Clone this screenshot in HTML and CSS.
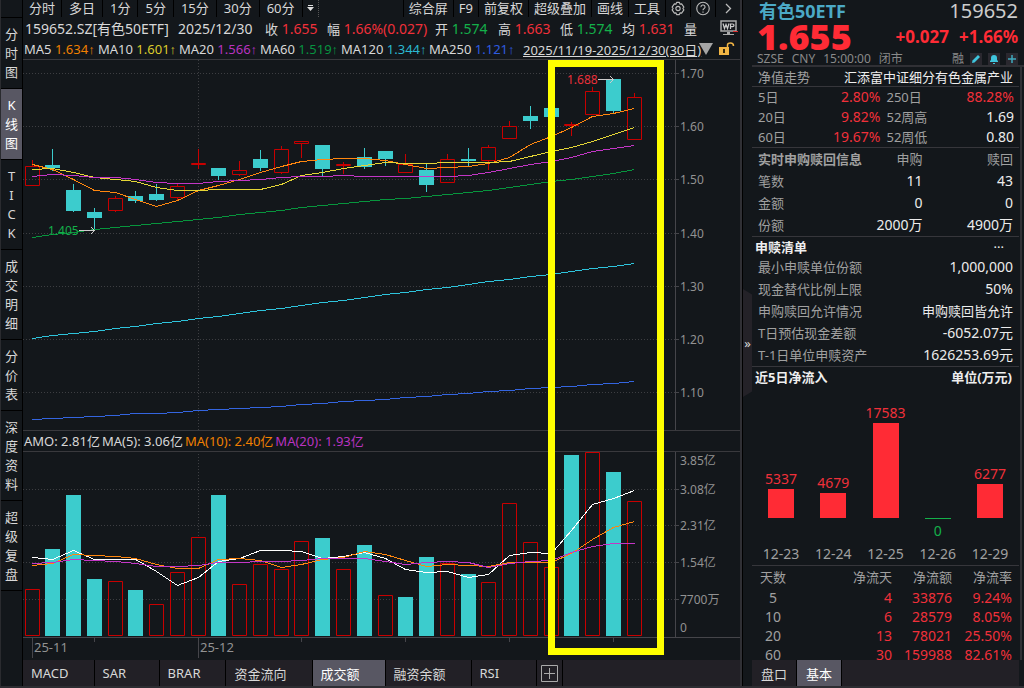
FILE: index.html
```html
<!DOCTYPE html>
<html lang="zh-CN">
<head>
  <meta charset="UTF-8">
  <meta name="viewport" content="width=device-width, initial-scale=1.0">
  <title>有色50ETF 159652.SZ</title>
  <link rel="stylesheet" href="styles.css">
</head>
<body>

<div class="app">
  <nav class="views">
    <button>分<br>时<br>图</button>
    <button class="active">K<br>线<br>图</button>
    <button>T<br>I<br>C<br>K</button>
    <button>成<br>交<br>明<br>细</button>
    <button>分<br>价<br>表</button>
    <button>深<br>度<br>资<br>料</button>
    <button>超<br>级<br>复<br>盘</button>
  </nav>

  <main class="chart-pane">
    <div class="toolbar">
      <div class="periods">
        <button>分时</button>
        <button>多日</button>
        <button>1分</button>
        <button>5分</button>
        <button>15分</button>
        <button>30分</button>
        <button>60分</button>
        <button class="more" aria-label="更多周期">
          <svg width="7" height="7" viewBox="0 0 7 7"><path d="M1 0.5H6" stroke="#ddd"/><path d="M0 2H7L3.500 6Z" fill="#ddd"/></svg>
        </button>
      </div>
      <div class="tools">
        <button>综合屏</button>
        <button>F9</button>
        <button>前复权</button>
        <button>超级叠加</button>
        <button>画线</button>
        <button>工具</button>
        <button class="icon" aria-label="设置">
          <svg width="15" height="15" viewBox="0 0 15 15" fill="none" stroke="#bbb" stroke-width="1.200"><path d="M6 1H9L9.600 2.800L11.400 2.500L13.800 6L12.700 7.500L13.800 9L11.400 12.500L9.600 12.200L9 14H6L5.400 12.200L3.600 12.500L1.200 9L2.300 7.500L1.200 6L3.600 2.500L5.400 2.800Z" stroke-linejoin="round"/><circle cx="7.500" cy="7.500" r="2.300"/></svg>
        </button>
        <button class="icon" aria-label="帮助">
          <svg width="15" height="15" viewBox="0 0 15 15" fill="none" stroke="#bbb" stroke-width="1.200"><circle cx="7.500" cy="7.500" r="6.700"/><path d="M5.300 6A2.200 2.100 0 1 1 8.500 7.700Q7.500 8.200 7.500 9.500"/><path d="M7.500 10.800V12.100"/></svg>
        </button>
        <button class="icon" aria-label="展开">
          <svg width="7" height="11" viewBox="0 0 7 11" fill="none" stroke="#bbb" stroke-width="1.300"><path d="M1 1L5.500 5.500L1 10"/></svg>
        </button>
      </div>
    </div>

    <div class="quote">
      <span>159652.SZ[有色50ETF]</span>
      <span>2025/12/30</span>
      <span><i>收</i> <b class="red">1.655</b></span>
      <span><i>幅</i> <b class="red">1.66%(0.027)</b></span>
      <span><i>开</i> <b class="green">1.574</b></span>
      <span><i>高</i> <b class="red">1.663</b></span>
      <span><i>低</i> <b class="green">1.574</b></span>
      <span><i>均</i> <b class="red">1.631</b></span>
      <span><i>量</i></span>
      <button aria-label="WP">
        <svg width="18" height="16" viewBox="0 0 18 16"><path d="M1 1H16V11H1Z" fill="#17191d" stroke="#aaa" stroke-width="1.500"/><path d="M3 3.500L4.500 8.500L6 4.500L7.500 8.500L9 3.500M10.500 9V4H12.500Q14 4 14 5.300Q14 6.600 12.500 6.600H10.500" fill="none" stroke="#ccc" stroke-width="1.200"/><path d="M7 12H10V14H14V15H3V14H7Z" fill="#aaa"/><path d="M13 11.500H18" stroke="#d33"/></svg>
      </button>
    </div>

    <div class="averages">
      <span>MA5 <b class="orange">1.634↑</b></span>
      <span>MA10 <b class="yellow">1.601↑</b></span>
      <span>MA20 <b class="purple">1.566↑</b></span>
      <span>MA60 <b class="ma-green">1.519↑</b></span>
      <span>MA120 <b class="cyan">1.344↑</b></span>
      <span>MA250 <b class="blue">1.121↑</b></span>
      <a href="#">2025/11/19-2025/12/30(30日)</a>
      <svg width="14" height="12" viewBox="0 0 14 12"><path d="M0 0H14L7 12Z" fill="#a5a5a5"/></svg>
      <button aria-label="解锁">
        <svg width="16" height="14" viewBox="0 0 16 14"><path d="M0 5H10V13H0Z" fill="#f2b544"/><path d="M8.500 5V3Q8.500 1 11.500 1Q14.500 1 14.500 4" fill="none" stroke="#f2b544" stroke-width="1.500"/><path d="M4 7H6V11H4Z" fill="#3a2c10"/></svg>
      </button>
    </div>

    <div class="charts">
      <svg class="plot" id="price" viewBox="23 60 717 370"></svg>
      <div class="amount">
        <span>AMO: 2.81亿</span>
        <span>MA(5): 3.06亿</span>
        <span class="orange">MA(10): 2.40亿</span>
        <span class="purple">MA(20): 1.93亿</span>
      </div>
      <svg class="plot" id="volume" viewBox="23 452 717 208"></svg>
      <div class="marker"></div>
    </div>

    <div class="tabs">
      <button>MACD</button>
      <button>SAR</button>
      <button>BRAR</button>
      <button>资金流向</button>
      <button class="active">成交额</button>
      <button>融资余额</button>
      <button>RSI</button>
      <button class="add" aria-label="添加指标">
        <svg width="17" height="17" viewBox="0 0 17 17" fill="none" stroke="#aaa"><path d="M0.500 0.500H16.500V16.500H0.500ZM8.500 3V14M3 8.500H14"/></svg>
      </button>
    </div>
  </main>

  <aside class="side">
    <div class="gutter"><button>»</button></div>
    <div class="sheet">
      <header>
        <div class="line name"><h1>有色50ETF</h1><span>159652</span></div>
        <div class="line last"><strong>1.655</strong><span>+0.027</span><span>+1.66%</span></div>
        <div class="line info">
          <span>SZSE</span><span>CNY</span><span>15:00:00</span><span>闭市</span>
          <span class="margin">融</span>
          <button aria-label="编辑"><svg width="12" height="12" viewBox="0 0 12 12"><path d="M2 10L2.500 7.500L8 2L10 4L4.500 9.500Z" fill="#3fc4dc"/></svg></button>
          <button aria-label="提醒"><svg width="12" height="12" viewBox="0 0 12 12"><path d="M2 9V8L3 7V5Q3 2 6 2Q9 2 9 5V7L10 8V9ZM5 10H7V11H5Z" fill="#3fc4dc"/></svg></button>
          <button aria-label="添加"><svg width="12" height="12" viewBox="0 0 12 12"><path d="M6 2V10M2 6H10" stroke="#3fa9be" stroke-width="1.500"/></svg></button>
        </div>
      </header>

      <div class="details">
        <section>
          <div class="title trend"><span>净值走势</span><a href="#">汇添富中证细分有色金属产业</a></div>
        </section>
        <section>
          <table class="returns">
            <tr><th>5日</th><td class="red">2.80%</td><th>250日</th><td class="red">88.28%</td></tr>
            <tr><th>20日</th><td class="red">9.82%</td><th>52周高</th><td>1.69</td></tr>
            <tr><th>60日</th><td class="red">19.67%</td><th>52周低</th><td>0.80</td></tr>
          </table>
        </section>
        <section>
          <table class="orders">
            <tr><th class="strong">实时申购赎回信息</th><th>申购</th><th>赎回</th></tr>
            <tr><th>笔数</th><td>11</td><td>43</td></tr>
            <tr><th>金额</th><td>0</td><td>0</td></tr>
            <tr><th>份额</th><td>2000万</td><td>4900万</td></tr>
          </table>
        </section>
        <section>
          <div class="title"><h2>申赎清单</h2><button aria-label="更多">···</button></div>
          <table class="list">
            <tr><th>最小申赎单位份额</th><td>1,000,000</td></tr>
            <tr><th>现金替代比例上限</th><td>50%</td></tr>
            <tr><th>申购赎回允许情况</th><td class="cjk">申购赎回皆允许</td></tr>
            <tr><th>T日预估现金差额</th><td>-6052.07元</td></tr>
            <tr><th>T-1日单位申赎资产</th><td>1626253.69元</td></tr>
          </table>
        </section>
        <section>
          <div class="title"><h2>近5日净流入</h2><h2>单位(万元)</h2></div>
          <div class="flow">
            <div class="day"><div class="up">5337<i style="height: 29px"></i></div><time>12-23</time></div>
            <div class="day"><div class="up">4679<i style="height: 25px"></i></div><time>12-24</time></div>
            <div class="day"><div class="up">17583<i style="height: 95px"></i></div><time>12-25</time></div>
            <div class="day"><div class="up"></div><div class="zero">0</div><time>12-26</time></div>
            <div class="day"><div class="up">6277<i style="height: 34px"></i></div><time>12-29</time></div>
          </div>
        </section>
        <table class="days">
          <tr><th>天数</th><th>净流天</th><th>净流额</th><th>净流率</th></tr>
          <tr><td>5</td><td>4</td><td>33876</td><td>9.24%</td></tr>
          <tr><td>10</td><td>6</td><td>28579</td><td>8.05%</td></tr>
          <tr><td>20</td><td>13</td><td>78021</td><td>25.50%</td></tr>
          <tr><td>60</td><td>30</td><td>159988</td><td>82.61%</td></tr>
        </table>
      </div>

      <div class="tabs">
        <button>盘口</button>
        <button class="active">基本</button>
      </div>
    </div>
  </aside>
</div>

<script>
  const STEP = 20.76;
  const BASE = 636;

  // high, body top, body bottom, low, rising
  const candles = [
    [160, 166, 186, 186, 1], [149, 165, 168, 171, 0], [184, 190, 211, 212, 0],
    [208, 212, 218, 229, 0], [196, 198, 211, 212, 1], [191, 196, 201, 203, 0],
    [184, 194, 200, 201, 0], [184, 186, 198, 201, 1], [149, 163, 165, 169, 1],
    [168, 168, 176, 180, 0], [161, 170, 175, 176, 1], [150, 159, 168, 171, 0],
    [146, 149, 173, 174, 1], [141, 141, 144, 158, 1], [145, 145, 169, 176, 0],
    [162, 164, 166, 174, 1], [148, 157, 167, 169, 0], [151, 151, 159, 166, 0],
    [154, 164, 173, 173, 1], [163, 170, 185, 192, 0], [154, 159, 183, 183, 1],
    [148, 159, 161, 166, 0], [145, 147, 161, 170, 1], [121, 126, 139, 139, 1],
    [106, 116, 121, 129, 0], [108, 108, 117, 117, 0], [122, 124, 126, 136, 1],
    [87, 91, 115, 115, 1], [79, 79, 111, 113, 0], [93, 97, 140, 140, 1]
  ];

  // bar top, rising
  const amounts = [
    [589, 1], [549, 0], [495, 0], [579, 0], [581, 1], [590, 0], [604, 1], [572, 1],
    [537, 1], [495, 0], [584, 1], [564, 1], [569, 1], [541, 1], [538, 0], [569, 1],
    [545, 0], [595, 1], [597, 0], [557, 0], [563, 1], [574, 0], [582, 1], [503, 1],
    [542, 1], [567, 1], [455, 0], [452, 1], [472, 0], [501, 1]
  ];

  const priceLines = {
    orange: [164, 169, 179, 190, 192, 199, 206, 200, 190, 185, 179, 172, 166, 161, 159, 158, 158, 160, 164, 168, 167, 166, 163, 157, 144, 136, 127, 116, 113, 108],
    yellow: [169, 168, 172, 177, 179, 181, 187, 190, 190, 189, 189, 189, 184, 175, 172, 168, 165, 162, 163, 163, 162, 162, 162, 161, 156, 151, 147, 141, 134, 127],
    purple: [176, 174, 175, 177, 177, 179, 182, 183, 183, 181, 180, 179, 177, 176, 176, 175, 176, 176, 176, 176, 176, 175, 172, 168, 164, 161, 157, 151, 148, 145],
    green: [237, 234, 232, 229, 227, 225, 223, 221, 219, 217, 214, 212, 210, 207, 205, 203, 201, 199, 198, 196, 194, 192, 190, 187, 184, 181, 179, 176, 173, 169],
    cyan: [338, 335, 333, 331, 328, 326, 323, 321, 318, 316, 313, 310, 308, 305, 302, 300, 297, 294, 292, 289, 287, 284, 281, 279, 276, 274, 271, 268, 266, 263],
    blue: [419, 418, 417, 416, 415, 413, 413, 412, 410, 409, 408, 407, 406, 404, 403, 401, 400, 399, 397, 396, 394, 393, 391, 390, 388, 387, 386, 384, 383, 381]
  };

  const amountLines = {
    white: [557, 559, 550, 559, 559, 559, 571, 585, 577, 561, 558, 550, 550, 551, 558, 556, 552, 558, 569, 572, 571, 577, 574, 555, 552, 553, 530, 504, 498, 490],
    orange: [565, 563, 554, 555, 556, 558, 564, 568, 568, 559, 558, 560, 567, 564, 559, 557, 551, 554, 560, 566, 564, 565, 566, 562, 562, 562, 553, 539, 527, 521],
    purple: [563, 562, 559, 560, 561, 563, 566, 566, 565, 562, 562, 561, 561, 560, 558, 558, 558, 561, 564, 562, 561, 562, 567, 563, 561, 560, 552, 546, 543, 543]
  };

  function center(i) {
    return Math.floor(32.1 + i * STEP) + 0.5;
  }

  function path(cls, d) {
    return `<path class="${cls}" d="${d}"/>`;
  }

  function text(cls, x, y, label) {
    return `<text class="${cls}" x="${x}" y="${y}">${label}</text>`;
  }

  function drawBody(i, top, bottom, rising) {
    const x = center(i);
    if (rising) {
      return path('rise', `M${x - 7} ${top + 0.5}H${x + 7}V${bottom - 0.5}H${x - 7}Z`);
    }
    return path('fall', `M${x - 7.5} ${top}H${x + 7.5}V${bottom}H${x - 7.5}Z`);
  }

  function drawLines(lines) {
    let out = '';
    for (const name in lines) {
      const points = lines[name].map((y, i) => `${center(i)},${y + 0.5}`).join(' ');
      out += `<polyline class="avg ${name}" points="${points}"/>`;
    }
    return out;
  }

  function drawPrice() {
    let out = path('dots', 'M198.5 60V430');
    const labels = ['1.70', '1.60', '1.50', '1.40', '1.30', '1.20', '1.10'];
    [73, 126, 179, 233, 286, 339, 392].forEach((y, i) => {
      out += path('dots', `M23 ${y + 0.5}H675`);
      out += path('axis', `M675 ${y + 0.5}H679`);
      out += text('label', 680, y + 5, labels[i]);
    });
    out += path('axis', 'M675.5 60V430');
    candles.forEach(([high, top, bottom, low, rising], i) => {
      const x = center(i);
      out += path(rising ? 'rise' : 'wick', `M${x} ${high}V${top}M${x} ${bottom}V${low}`);
      out += drawBody(i, top, bottom, rising);
    });
    out += drawLines(priceLines);
    out += text('high', 567, 84, '1.688') + path('arrow', 'M598 79.5H613M610 76L613.500 79.500L610 83');
    out += text('low', 48, 235, '1.405') + path('arrow', 'M79 230.5H95M91 227L94.500 230.500L91 234');
    document.getElementById('price').innerHTML = out;
  }

  function drawVolume() {
    let out = path('dots', 'M198.5 454V537');
    [489, 525, 562, 599].forEach(y => {
      out += path('dots', `M23 ${y + 0.5}H675`) + path('axis', `M675 ${y + 0.5}H679`);
    });
    out += path('axis', 'M675.5 452V637M23 637.5H740M32.5 638V658M198.5 638V658');
    out += path('axis', 'M94.5 638V642M301.5 638V642M405.5 638V642M509.5 638V642M613.5 638V642');
    amounts.forEach(([top, rising], i) => {
      out += drawBody(i, top, BASE, rising);
    });
    out += drawLines(amountLines);
    const labels = { 465: '3.85亿', 494: '3.08亿', 530: '2.31亿', 567: '1.54亿', 604: '7700万', 632: '0' };
    for (const y in labels) {
      out += text('label', 680, y, labels[y]);
    }
    out += text('label date', 34, 652, '25-11') + text('label date', 200, 652, '25-12');
    document.getElementById('volume').innerHTML = out;
  }

  drawPrice();
  drawVolume();
</script>

</body>
</html>
```
FILE: styles.css
```css
* {
  box-sizing: border-box;
}

body {
  margin: 0;
  background: #13171b;
  color: #d8d8d8;
  font-family: "Noto Sans", "Liberation Sans", "Noto Sans CJK SC", sans-serif;
  font-size: 13px;
}

button {
  margin: 0;
  padding: 0;
  border: none;
  background: none;
  color: inherit;
  font: inherit;
  cursor: pointer;
}

a {
  color: inherit;
}

b, i {
  font-weight: normal;
  font-style: normal;
}

h1, h2 {
  margin: 0;
  font-weight: bold;
}

svg {
  display: block;
}

.red { color: #f0303a; }
.green { color: #14b04a; }
.orange { color: #f08000; }
.yellow { color: #dccb2c; }
.purple { color: #b933c0; }
.ma-green { color: #079340; }
.cyan { color: #2bb8d0; }
.blue { color: #2f5be0; }

.app {
  display: flex;
  height: 100vh;
  overflow: hidden;
  border-bottom: 2px solid #2d2d32;
}

/* left view switcher */
.views {
  flex: none;
  display: flex;
  flex-direction: column;
  width: 23px;
  padding-top: 17px;
  border-left: 1px solid #2a2b2f;
  border-right: 1px solid #000;
}

.views button {
  padding: 7px 0 6px;
  border-top: 1px solid #000;
  line-height: 19px;
}

.views button:last-child {
  border-bottom: 1px solid #000;
}

.views .active,
.tabs .active {
  background: #585763;
  color: #fff;
}

.chart-pane {
  flex: 1;
  display: flex;
  flex-direction: column;
  min-width: 0;
}

.toolbar {
  display: flex;
  justify-content: space-between;
  height: 17px;
  line-height: 17px;
}

.periods,
.tools {
  display: flex;
}

.toolbar button {
  border-left: 1px solid #000;
  white-space: nowrap;
}

.periods button {
  padding: 0 7px;
}

.periods button:first-child {
  padding: 0 6px;
  border-left: none;
}

.periods .more {
  padding: 0 4px;
  border-right: 1px dotted #555;
}

.tools button {
  padding: 0 5px;
}

.tools .icon {
  display: flex;
  align-items: center;
  justify-content: center;
  width: 25px;
}

.quote {
  display: grid;
  grid-template-columns: 153px 87px 62px 108px 63px 62px 62px 62px 1fr 20px;
  align-items: center;
  height: 22px;
  padding-left: 2px;
  font-size: 14px;
  white-space: nowrap;
}

.quote i {
  font-size: 13px;
}

.averages {
  display: grid;
  grid-template-columns: 74px 81px 81px 81px 88px 94px 176px 1fr 21px;
  align-items: center;
  height: 21px;
  padding-left: 1px;
  border-bottom: 1px solid #39393d;
  white-space: nowrap;
}

.charts {
  position: relative;
}

.plot {
  width: 100%;
  height: auto;
}

.amount {
  display: flex;
  align-items: center;
  gap: 2px;
  height: 22px;
  padding-left: 1px;
  border-top: 1px solid #39393d;
  border-bottom: 1px solid #39393d;
  line-height: 18px;
}

/* highlighted range over both charts */
.marker {
  position: absolute;
  top: 0;
  left: 73.2%;
  width: 16.2%;
  height: 99.2%;
  border: 7px solid #ff0;
}

.plot path,
.plot polyline {
  fill: none;
  stroke-width: 1;
}

.plot .dots {
  stroke: #3d3e42;
  stroke-dasharray: 1 2;
}

.plot .axis { stroke: #45454a; }
.plot .rise { stroke: #c80000; }
.plot .wick { stroke: #3ccccd; }
.plot .fall { fill: #3ccccd; }
.plot .arrow { stroke: #ccc; }

.plot .avg { shape-rendering: crispEdges; }
.plot .white { stroke: #fff; }
.plot .orange { stroke: #ff870f; }
.plot .yellow { stroke: #e5d636; }
.plot .purple { stroke: #c336c6; }
.plot .green { stroke: #07953d; }
.plot .cyan { stroke: #2ec4dc; }
.plot .blue { stroke: #3465e0; }

.plot text { font-size: 12px; }
.plot .date { font-size: 13px; }
.plot .label { fill: #929292; }
.plot .high { fill: #e8303a; }
.plot .low { fill: #14b04a; }

.tabs {
  display: flex;
  flex: none;
  height: 26px;
  background: #222026;
}

.tabs button {
  min-width: 65px;
  padding: 0 25px 0 8px;
  border-right: 1px solid #000;
  text-align: left;
}

.tabs .add {
  min-width: 0;
  padding: 0 4px;
}

/* right panel */
.side {
  flex: none;
  display: flex;
  width: 284px;
  border-left: 2px solid #303035;
}

.gutter {
  display: flex;
  align-items: center;
  width: 10px;
  border-left: 1px solid #000;
}

.gutter button {
  width: 9px;
  height: 108px;
  background: #242228;
  clip-path: polygon(0 0, 100% 5%, 100% 95%, 0 100%);
}

.sheet {
  flex: 1;
  display: flex;
  flex-direction: column;
  min-width: 0;
}

header {
  height: 67px;
  padding: 0 6px 0 5px;
  border-bottom: 2px solid #303035;
}

.line {
  display: flex;
  align-items: center;
  justify-content: space-between;
}

.name {
  height: 22px;
  padding-left: 2px;
  color: #ccc;
  font-size: 20px;
  line-height: 22px;
}

.name h1 {
  color: #4ba9c6;
  font-size: 18px;
}

.last {
  height: 30px;
  gap: 10px;
  color: #ff2b35;
  font-size: 17px;
  font-weight: bold;
  line-height: 28px;
}

.last strong {
  flex: 1;
  font-size: 36px;
}

.info {
  justify-content: flex-start;
  gap: 8px;
  height: 13px;
  color: #8a8a8a;
  font-size: 12px;
  line-height: 13px;
}

.info .margin {
  margin-left: auto;
}

.info button {
  margin-left: -2px;
  background: #2a282f;
}

.details {
  flex: 1;
  min-height: 0;
  margin-right: 2px;
  padding-right: 1px;
  border-right: 2px solid #303035;
  overflow: hidden;
}

section {
  border-bottom: 1px solid #36363b;
}

.title {
  display: flex;
  align-items: center;
  justify-content: space-between;
  height: 19px;
  padding: 0 7px 0 3px;
  color: #eee;
}

.title h2 {
  font-size: 13px;
}

.title button {
  padding-right: 8px;
}

.trend {
  padding: 0 6px;
}

.trend span {
  color: #a0a0a0;
}

.trend a {
  text-decoration: none;
}

table {
  width: 100%;
  border-collapse: collapse;
  table-layout: fixed;
}

th,
td {
  height: 22px;
  padding: 0 6px;
  line-height: 18px;
  white-space: nowrap;
}

th {
  color: #a0a0a0;
  font-weight: normal;
  text-align: left;
}

td {
  color: #ececec;
  font-size: 14px;
  text-align: right;
}

td.red {
  color: #f0303a;
}

.returns th,
.returns td {
  height: 20px;
}

.returns td:nth-child(2) {
  padding-left: 0;
  padding-right: 5px;
}

.returns td:nth-child(4) {
  padding-right: 5px;
}

.returns th:nth-child(3) {
  padding-left: 1px;
}

.orders th + th {
  text-align: right;
}

.orders th:first-child {
  width: 120px;
}

.orders td:nth-child(2),
.orders th:nth-child(2) {
  padding-left: 0;
  padding-right: 23px;
}

.orders td:nth-child(3),
.orders th:nth-child(3) {
  padding-left: 0;
}

.orders .strong {
  font-weight: bold;
}

.list th {
  width: 140px;
}

.list .cjk {
  font-size: 13px;
}

.flow {
  display: flex;
  padding: 0 3px;
  font-size: 14px;
}

.day {
  flex: 1;
  display: grid;
  grid-template-rows: 132px 25px 22px;
  justify-items: center;
}

.up {
  display: flex;
  flex-direction: column;
  align-items: center;
  justify-content: flex-end;
  color: #f0303a;
  line-height: 21px;
}

.up i {
  width: 26px;
  background: #ff2b35;
}

.zero {
  width: 26px;
  border-top: 1px solid #14b04a;
  color: #14b04a;
  line-height: 24px;
  text-align: center;
}

.day time {
  grid-row: 3;
  color: #a0a0a0;
  line-height: 22px;
}

.days th,
.days td {
  height: 19px;
  padding: 0 7px 0 0;
  text-align: right;
}

.days th {
  height: 22px;
}

.days td {
  color: #f0303a;
}

.days th:first-child,
.days td:first-child {
  width: 42px;
  padding: 0;
  color: #a0a0a0;
  text-align: center;
}

.days th:nth-child(3) {
  width: 60px;
}

.days th:nth-child(4) {
  width: 60px;
}

.side .tabs {
  margin-right: 5px;
}

.side .tabs button {
  min-width: 0;
  padding: 0 9px;
}
```
